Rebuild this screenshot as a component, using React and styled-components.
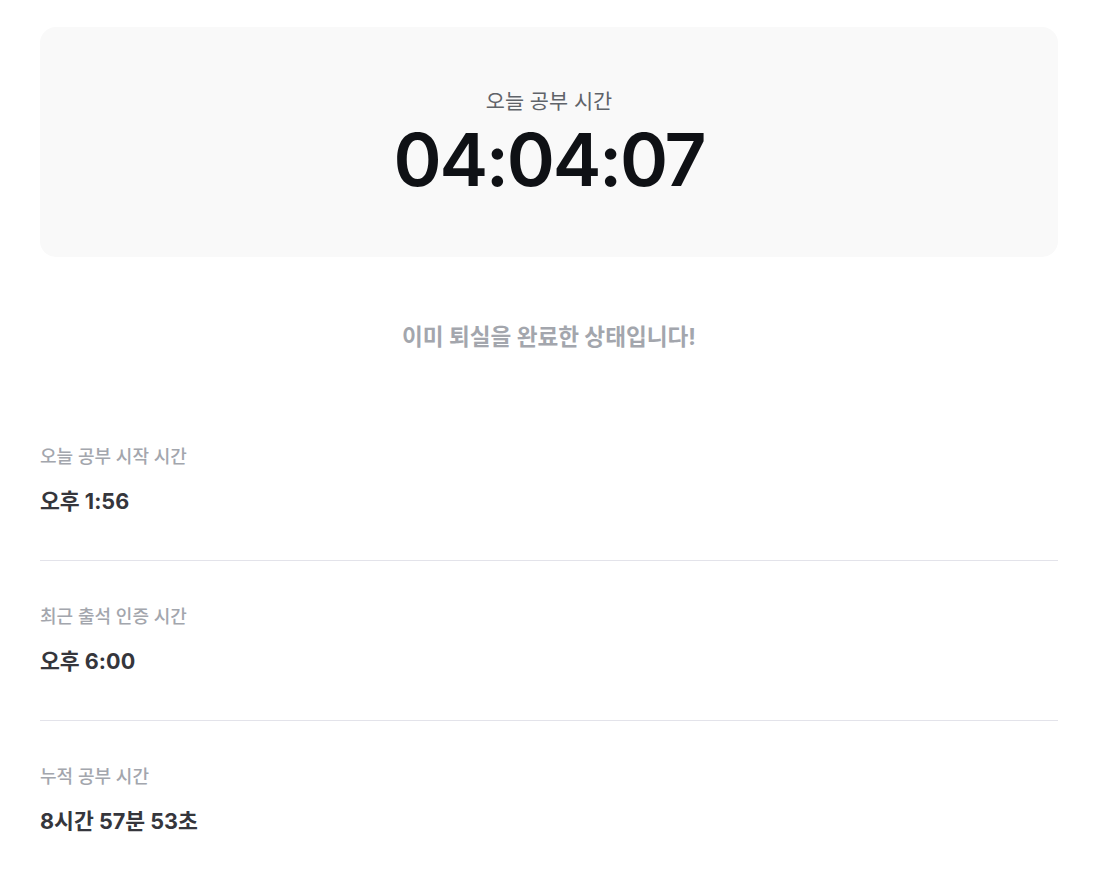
import React from "react";
import styled, { createGlobalStyle } from "styled-components";

const GlobalStyle = createGlobalStyle`
  * {
    margin: 0;
    padding: 0;
    box-sizing: border-box;
  }
  body {
    background: #ffffff;
    font-family: Inter, "Noto Sans CJK KR", sans-serif;
  }
`;

const Page = styled.div`
  padding: 27px 35px 40px 40px;
  display: flex;
  flex-direction: column;
`;

const TimerCard = styled.section`
  height: 230px;
  background: #f9f9f9;
  border-radius: 16px;
  display: flex;
  flex-direction: column;
  align-items: center;
  justify-content: center;
  padding-top: 10px;
`;

const TimerLabel = styled.div`
  font-size: 20.8px;
  line-height: 26px;
  color: #5f6369;
  font-weight: 400;
`;

const TimerValue = styled.div`
  font-size: 73px;
  line-height: 90px;
  font-weight: 600;
  color: #0f1115;
  letter-spacing: -0.031em;
`;

const Notice = styled.p`
  margin-top: 65px;
  text-align: center;
  font-size: 22.6px;
  line-height: 30px;
  font-weight: 700;
  color: #a3a6ad;
`;

const InfoList = styled.div`
  margin-top: 93px;
  display: flex;
  flex-direction: column;
`;

const InfoRow = styled.div`
  padding: ${(p) => (p.$first ? "0" : "44px")} 0 45px;
  border-bottom: ${(p) => (p.$last ? "none" : "1px solid #e3e3ea")};
  display: flex;
  flex-direction: column;
  gap: 18px;
`;

const InfoLabel = styled.div`
  font-size: 18px;
  line-height: 24px;
  color: #a3a6ad;
  font-weight: 500;
`;

const InfoValue = styled.div`
  font-size: 21.6px;
  line-height: 28px;
  color: #35363c;
  font-weight: 700;
`;

const rows = [
  { label: "오늘 공부 시작 시간", value: "오후 1:56" },
  { label: "최근 출석 인증 시간", value: "오후 6:00" },
  { label: "누적 공부 시간", value: "8시간 57분 53초" },
];

export default function App() {
  return (
    <>
      <GlobalStyle />
      <Page>
        <TimerCard>
          <TimerLabel>오늘 공부 시간</TimerLabel>
          <TimerValue>04:04:07</TimerValue>
        </TimerCard>
        <Notice>이미 퇴실을 완료한 상태입니다!</Notice>
        <InfoList>
          {rows.map((r, i) => (
            <InfoRow key={r.label} $first={i === 0} $last={i === rows.length - 1}>
              <InfoLabel>{r.label}</InfoLabel>
              <InfoValue>{r.value}</InfoValue>
            </InfoRow>
          ))}
        </InfoList>
      </Page>
    </>
  );
}
